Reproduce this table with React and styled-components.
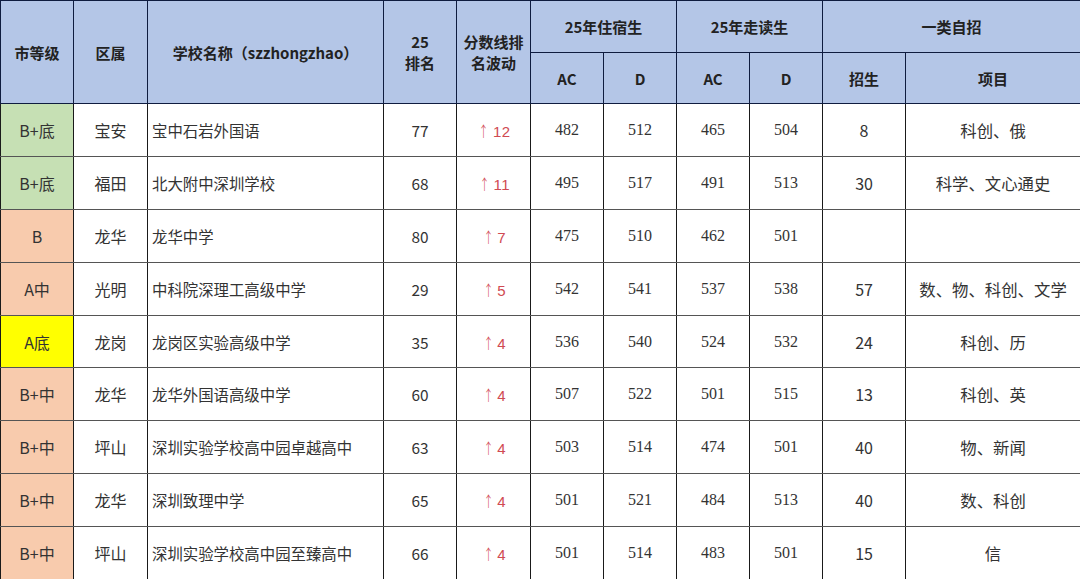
import React from 'react';
import styled, { createGlobalStyle } from 'styled-components';

const GlobalStyle = createGlobalStyle`
  html, body {
    margin: 0;
    padding: 0;
    background: #ffffff;
  }
  body {
    font-family: "Noto Sans CJK SC", "Noto Sans", sans-serif;
  }
`;

const colors = {
  header: '#b4c6e7',
  green: '#c6e0b4',
  peach: '#f8cbad',
  yellow: '#ffff00',
  line: '#1a1a1a',
  headLine: '#0f1c3f',
  text: '#333333',
  up: '#d04a52',
};

const Table = styled.table`
  width: 1080px;
  height: 579px;
  border-collapse: collapse;
  table-layout: fixed;
  color: ${colors.text};
`;

const HeadCell = styled.th`
  background: ${colors.header};
  border: 1.5px solid ${colors.headLine};
  font-weight: 700;
  font-size: 15px;
  line-height: 21px;
  color: #222;
  text-align: center;
  padding: 0;
`;

const HeadRow = styled.tr`
  height: ${p => p.$h}px;
`;

const BodyRow = styled.tr`
  height: 52.9px;
`;

const Cell = styled.td`
  border: 1.5px solid ${colors.line};
  border-top-color: #555;
  border-bottom-color: #555;
  padding: 0 ${p => (p.$left ? '4px' : '0')};
  text-align: ${p => (p.$left ? 'left' : 'center')};
  font-size: ${p => p.$size || 15.4}px;
  background: ${p => p.$bg || '#fff'};
  font-family: ${p =>
    p.$serif
      ? '"Liberation Serif", "Noto Sans CJK SC", serif'
      : '"Noto Sans CJK SC", "Noto Sans", sans-serif'};
  white-space: nowrap;
`;

const Up = styled.span`
  color: ${colors.up};
  font-family: "Liberation Sans", "Noto Sans CJK SC", sans-serif;
  font-size: 15px;
  letter-spacing: 0.5px;
`;

const Arrow = styled.span`
  display: inline-block;
  font-family: "Noto Sans CJK SC", sans-serif;
  font-weight: 300;
  transform: scaleX(0.7);
  margin-right: 1px;
`;

const rows = [
  ['B+底', '宝安', '宝中石岩外国语', 77, 12, 482, 512, 465, 504, '8', '科创、俄', colors.green],
  ['B+底', '福田', '北大附中深圳学校', 68, 11, 495, 517, 491, 513, '30', '科学、文心通史', colors.green],
  ['B', '龙华', '龙华中学', 80, 7, 475, 510, 462, 501, '', '', colors.peach],
  ['A中', '光明', '中科院深理工高级中学', 29, 5, 542, 541, 537, 538, '57', '数、物、科创、文学', colors.peach],
  ['A底', '龙岗', '龙岗区实验高级中学', 35, 4, 536, 540, 524, 532, '24', '科创、历', colors.yellow],
  ['B+中', '龙华', '龙华外国语高级中学', 60, 4, 507, 522, 501, 515, '13', '科创、英', colors.peach],
  ['B+中', '坪山', '深圳实验学校高中园卓越高中', 63, 4, 503, 514, 474, 501, '40', '物、新闻', colors.peach],
  ['B+中', '龙华', '深圳致理中学', 65, 4, 501, 521, 484, 513, '40', '数、科创', colors.peach],
  ['B+中', '坪山', '深圳实验学校高中园至臻高中', 66, 4, 501, 514, 483, 501, '15', '信', colors.peach],
];

const widths = [73, 74, 236, 73, 74, 73, 73, 73, 73, 83, 175];

export default function App() {
  return (
    <>
      <GlobalStyle />
      <Table>
        <colgroup>
          {widths.map((w, i) => (
            <col key={i} style={{ width: w }} />
          ))}
        </colgroup>
        <thead>
          <HeadRow $h={52}>
            <HeadCell rowSpan={2}>市等级</HeadCell>
            <HeadCell rowSpan={2}>区属</HeadCell>
            <HeadCell rowSpan={2}>学校名称（szzhongzhao）</HeadCell>
            <HeadCell rowSpan={2}>25<br />排名</HeadCell>
            <HeadCell rowSpan={2}>分数线排<br />名波动</HeadCell>
            <HeadCell colSpan={2}>25年住宿生</HeadCell>
            <HeadCell colSpan={2}>25年走读生</HeadCell>
            <HeadCell colSpan={2}>一类自招</HeadCell>
          </HeadRow>
          <HeadRow $h={51}>
            <HeadCell>AC</HeadCell>
            <HeadCell>D</HeadCell>
            <HeadCell>AC</HeadCell>
            <HeadCell>D</HeadCell>
            <HeadCell>招生</HeadCell>
            <HeadCell>项目</HeadCell>
          </HeadRow>
        </thead>
        <tbody>
          {rows.map((r, i) => (
            <BodyRow key={i}>
              <Cell $bg={r[11]} $size={16}>{r[0]}</Cell>
              <Cell $size={16}>{r[1]}</Cell>
              <Cell $left>{r[2]}</Cell>
              <Cell>{r[3]}</Cell>
              <Cell>
                <Up><Arrow>↑</Arrow>{r[4]}</Up>
              </Cell>
              <Cell $serif $size={16}>{r[5]}</Cell>
              <Cell $serif $size={16}>{r[6]}</Cell>
              <Cell $serif $size={16}>{r[7]}</Cell>
              <Cell $serif $size={16}>{r[8]}</Cell>
              <Cell $size={16}>{r[9]}</Cell>
              <Cell $size={16.4}>{r[10]}</Cell>
            </BodyRow>
          ))}
        </tbody>
      </Table>
    </>
  );
}
